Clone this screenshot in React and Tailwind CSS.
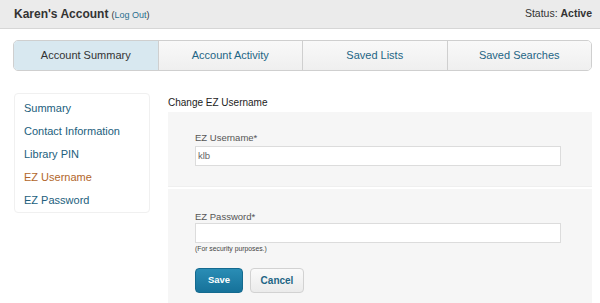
const tabs = ['Account Summary', 'Account Activity', 'Saved Lists', 'Saved Searches'];
const sideLinks = ['Summary', 'Contact Information', 'Library PIN', 'EZ Username', 'EZ Password'];

export default function App() {
  return (
    <div className="w-[600px] h-[303px] overflow-hidden bg-white font-['Liberation_Sans',Arial,sans-serif]">
      <div className="h-[29px] bg-[#ebebeb] border-b border-[#d6d6d6] flex items-center justify-between pl-[14px] pr-[8px]">
        <div className="flex items-baseline gap-[3px]">
          <span className="text-[12px] font-bold text-[#333]">Karen's Account</span>
          <span className="text-[9px] text-[#333]">
            (<span className="text-[#2a6f8e]">Log Out</span>)
          </span>
        </div>
        <div className="text-[10.5px] text-[#333]">
          Status: <span className="font-bold">Active</span>
        </div>
      </div>

      <div className="ml-[13px] mr-[8px] mt-[11px] h-[31px] flex border border-[#cfcfcf] rounded-[5px] overflow-hidden">
        {tabs.map((t, i) => (
          <div
            key={t}
            className={`flex-1 flex items-center justify-center text-[11px] ${
              i > 0 ? 'border-l border-[#cfcfcf]' : ''
            } ${
              i === 0
                ? 'bg-[#d8e8f0] text-[#333]'
                : 'bg-gradient-to-b from-[#f9f9f9] to-[#efefef] text-[#1e6585]'
            }`}
          >
            {t}
          </div>
        ))}
      </div>

      <div className="flex mt-[22px] ml-[14px] mr-[8px] gap-[18px]">
        <div className="w-[136px] h-[120px] shrink-0 border border-[#f0f0f0] rounded-[4px] pl-[9px] pt-[3px] flex flex-col">
          {sideLinks.map((l) => (
            <div
              key={l}
              className={`h-[23px] flex items-center text-[11px] ${
                l === 'EZ Username' ? 'text-[#b2662a]' : 'text-[#22607d]'
              }`}
            >
              {l}
            </div>
          ))}
        </div>

        <div className="flex-1">
          <div className="text-[10px] text-[#222] h-[19px] flex items-center">Change EZ Username</div>
          <div className="bg-[#f6f6f6] pt-[19px] pb-[20px] pl-[27px] pr-[31px]">
            <div className="text-[9.5px] text-[#555] leading-[13px]">EZ Username*</div>
            <div className="mt-[2px] h-[20px] bg-white border border-[#dcdcdc] flex items-center px-[2px] text-[9.5px] text-[#666]">
              klb
            </div>
          </div>
          <div className="h-[3px] border-t border-[#efefef]"></div>
          <div className="bg-[#f6f6f6] h-[120px] pt-[21px] pl-[27px] pr-[31px]">
            <div className="text-[9.5px] text-[#555] leading-[13px]">EZ Password*</div>
            <div className="h-[20px] bg-white border border-[#dcdcdc]"></div>
            <div className="text-[6.8px] text-[#444] mt-[2px] leading-[8px]">(For security purposes.)</div>
            <div className="flex gap-[7px] mt-[15px]">
              <div className="w-[48px] h-[25px] rounded-[4px] bg-gradient-to-b from-[#2a8db5] to-[#16729a] border border-[#146a8f] flex items-center justify-center text-[9.5px] font-bold text-white">
                Save
              </div>
              <div className="w-[54px] h-[25px] rounded-[4px] bg-gradient-to-b from-[#fafafa] to-[#ebebeb] border border-[#d2d2d2] flex items-center justify-center text-[10px] font-bold text-[#1e6585]">
                Cancel
              </div>
            </div>
          </div>
        </div>
      </div>
    </div>
  );
}
